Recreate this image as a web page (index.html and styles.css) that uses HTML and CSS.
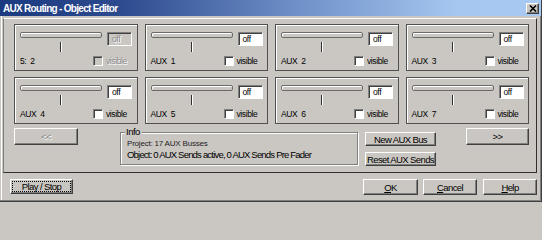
FILE: index.html
```html
<!DOCTYPE html>
<html>
<head>
<meta charset="utf-8">
<link rel="stylesheet" href="styles.css">
</head>
<body>
<div class="window">
  <div class="titlebar">
    <span class="title">AUX Routing - Object Editor</span>
    <span class="close"><svg width="8" height="7" viewBox="0 0 8 7"><path d="M1 0.5 L7 6.5 M7 0.5 L1 6.5" stroke="#000" stroke-width="1.6" fill="none"/></svg></span>
  </div>
  <div class="panel">
    <div class="grid">
      <div class="cell disabled">
        <div class="top"><div class="slider"><div class="track"></div><div class="tick"></div></div><div class="offbox">off</div></div>
        <div class="bottom"><span class="label">5:&nbsp; 2</span><span class="check"></span><span class="vis">visible</span></div>
      </div>
      <div class="cell">
        <div class="top"><div class="slider"><div class="track"></div><div class="tick"></div></div><div class="offbox">off</div></div>
        <div class="bottom"><span class="label">AUX&nbsp; 1</span><span class="check"></span><span class="vis">visible</span></div>
      </div>
      <div class="cell">
        <div class="top"><div class="slider"><div class="track"></div><div class="tick"></div></div><div class="offbox">off</div></div>
        <div class="bottom"><span class="label">AUX&nbsp; 2</span><span class="check"></span><span class="vis">visible</span></div>
      </div>
      <div class="cell">
        <div class="top"><div class="slider"><div class="track"></div><div class="tick"></div></div><div class="offbox">off</div></div>
        <div class="bottom"><span class="label">AUX&nbsp; 3</span><span class="check"></span><span class="vis">visible</span></div>
      </div>
      <div class="cell">
        <div class="top"><div class="slider"><div class="track"></div><div class="tick"></div></div><div class="offbox">off</div></div>
        <div class="bottom"><span class="label">AUX&nbsp; 4</span><span class="check"></span><span class="vis">visible</span></div>
      </div>
      <div class="cell">
        <div class="top"><div class="slider"><div class="track"></div><div class="tick"></div></div><div class="offbox">off</div></div>
        <div class="bottom"><span class="label">AUX&nbsp; 5</span><span class="check"></span><span class="vis">visible</span></div>
      </div>
      <div class="cell">
        <div class="top"><div class="slider"><div class="track"></div><div class="tick"></div></div><div class="offbox">off</div></div>
        <div class="bottom"><span class="label">AUX&nbsp; 6</span><span class="check"></span><span class="vis">visible</span></div>
      </div>
      <div class="cell">
        <div class="top"><div class="slider"><div class="track"></div><div class="tick"></div></div><div class="offbox">off</div></div>
        <div class="bottom"><span class="label">AUX&nbsp; 7</span><span class="check"></span><span class="vis">visible</span></div>
      </div>
    </div>
    <div class="controls">
      <div class="btn btn-prev disabled-text">&lt;&lt;</div>
      <div class="info">
        <span class="legend">Info</span>
        <div class="info-project">Project: 17 AUX Busses</div>
        <div class="info-object">Object: 0 AUX Sends active, 0 AUX Sends Pre Fader</div>
      </div>
      <div class="mid-buttons">
        <div class="btn btn-mid">New AUX Bus</div>
        <div class="btn btn-mid">Reset AUX Sends</div>
      </div>
      <div class="btn btn-next">&gt;&gt;</div>
    </div>
  </div>
  <div class="footer">
    <div class="btn btn-play"><span class="focus">Play / Stop</span></div>
    <div class="btn btn-ok"><u>O</u>K</div>
    <div class="btn btn-cancel"><u>C</u>ancel</div>
    <div class="btn btn-help"><u>H</u>elp</div>
  </div>
</div>
</body>
</html>
```
FILE: styles.css
```css
* { box-sizing: border-box; }
html, body { margin: 0; padding: 0; background: #cac7c2; }
body {
  width: 542px;
  height: 202px;
  overflow: hidden;
  font-family: "Liberation Sans", Arial, sans-serif;
  font-size: 9.5px;
  letter-spacing: -0.5px;
  color: #000;
}
.window {
  width: 542px;
  height: 202px;
  background: #cac7c2;
  border-right: 1px solid #404040;
  border-bottom: 1px solid #404040;
  box-shadow: inset -1px -1px 0 #808080, inset 1px 0 0 #cac7c2, inset 2px 0 0 #ffffff;
}
.titlebar {
  height: 16px;
  display: flex;
  align-items: center;
  justify-content: space-between;
  padding: 0 2px 0 3px;
  background: linear-gradient(to right, #1c3a80 0%, #2c4a8e 22%, #6f90c8 55%, #a6c8f0 85%, #a8caf2 100%);
}
.title {
  color: #fff;
  font-weight: bold;
  font-size: 10px;
  letter-spacing: -0.7px;
}
.close {
  width: 13px;
  height: 11px;
  background: #cac7c2;
  border: 1px solid;
  border-color: #fff #404040 #404040 #fff;
  box-shadow: inset -1px -1px 0 #808080;
  display: flex;
  align-items: center;
  justify-content: center;
}
.close svg { display: block; }
.panel {
  margin: 2px 0 0 3px;
  width: 534px;
  height: 155px;
  border-top: 1px solid #fff;
  border-left: 1px solid #808080;
  border-right: 1px solid #303030;
  border-bottom: 1px solid #303030;
  padding: 5px 0 0 10px;
}
.grid {
  width: 515px;
  display: grid;
  grid-template-columns: repeat(4, 1fr);
  grid-auto-rows: 47px;
  column-gap: 7px;
  row-gap: 6px;
}
.cell {
  border: 1px solid #505050;
  box-shadow: inset 1px 1px 0 #fff;
  padding: 7px 0 0 5px;
  font-size: 8.5px;
  letter-spacing: -0.4px;
}
.top {
  display: flex;
  align-items: flex-start;
  height: 20px;
}
.slider {
  width: 82px;
  display: flex;
  flex-direction: column;
}
.track {
  height: 6px;
  border: 1px solid #6a6a6a;
  border-radius: 2px;
  background: #cac7c2;
  box-shadow: inset 1px 1px 0 #fff;
}
.tick {
  width: 1px;
  height: 10px;
  margin: 4px 0 0 40px;
  background: #303030;
  box-shadow: 1px 0 0 #fff;
}
.offbox {
  margin-left: 5px;
  width: 25px;
  height: 14px;
  background: #fff;
  border: 1px solid;
  border-color: #808080 #fff #fff #808080;
  box-shadow: inset 1px 1px 0 #404040;
  padding-left: 4px;
  line-height: 12px;
}
.bottom {
  display: flex;
  align-items: center;
  height: 12px;
  margin-top: 3px;
}
.label {
  width: 73px;
  white-space: nowrap;
}
.check {
  width: 10px;
  height: 10px;
  background: #fff;
  border: 1px solid;
  border-color: #808080 #fff #fff #808080;
  box-shadow: inset 1px 1px 0 #404040;
}
.vis {
  margin-left: 3px;
}
.cell.disabled .offbox,
.cell.disabled .check {
  background: #cac7c2;
}
.cell.disabled .offbox,
.cell.disabled .vis,
.disabled-text {
  color: #8a8a8a;
  text-shadow: 1px 1px 0 #fff;
}
.controls {
  display: flex;
  align-items: flex-start;
  margin-top: 4px;
}
.btn {
  background: #cac7c2;
  border: 1px solid;
  border-color: #fff #404040 #404040 #fff;
  box-shadow: inset -1px -1px 0 #808080;
  display: flex;
  align-items: center;
  justify-content: center;
  white-space: nowrap;
  font-size: 9.5px;
  letter-spacing: -0.6px;
}
.btn-prev {
  width: 64px;
  height: 17px;
}
.info {
  position: relative;
  margin: 4px 0 0 42px;
  width: 238px;
  height: 33px;
  border: 1px solid #808080;
  box-shadow: inset 1px 1px 0 #fff, 1px 1px 0 #fff;
  padding: 5px 0 0 6px;
}
.legend {
  position: absolute;
  left: 4px;
  top: -7px;
  background: #cac7c2;
  padding: 0 2px 0 1px;
  line-height: 12px;
}
.info-project {
  font-size: 8px;
  letter-spacing: -0.2px;
  line-height: 11px;
  color: #222;
}
.info-object {
  font-size: 9.5px;
  letter-spacing: -0.8px;
  line-height: 12px;
  white-space: nowrap;
}
.mid-buttons {
  display: flex;
  flex-direction: column;
  gap: 6px;
  margin: 4px 0 0 7px;
  width: 71px;
}
.btn-mid {
  height: 14px;
}
.btn-next {
  margin-left: 30px;
  width: 63px;
  height: 17px;
}
.footer {
  display: flex;
  align-items: flex-start;
  padding-top: 6px;
}
.btn-play {
  margin-left: 10px;
  width: 63px;
  height: 15px;
  padding: 1px;
}
.focus {
  flex: 1;
  align-self: stretch;
  border: 1px dotted #000;
  display: flex;
  align-items: center;
  justify-content: center;
}
.btn-ok {
  margin-left: 290px;
  width: 55px;
  height: 16px;
}
.btn-cancel {
  margin-left: 5px;
  width: 54px;
  height: 16px;
}
.btn-help {
  margin-left: 6px;
  width: 54px;
  height: 16px;
}
```
